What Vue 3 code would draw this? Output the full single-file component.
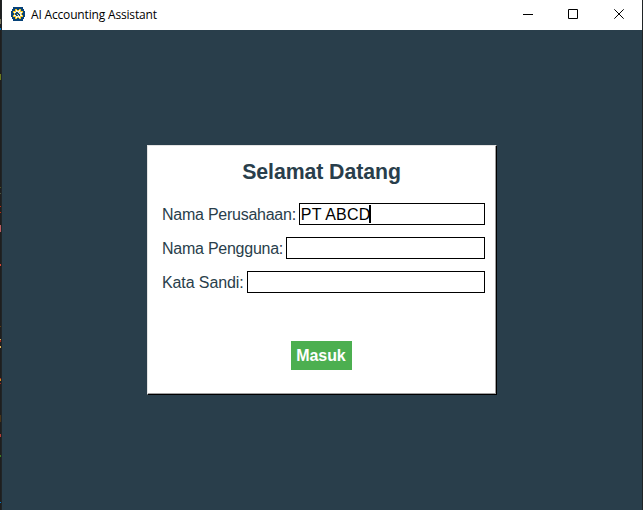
<script setup>
import { ref } from 'vue'

const title = 'AI Accounting Assistant'
const fields = ref([
  { label: 'Nama Perusahaan:', value: 'PT ABCD', focused: true },
  { label: 'Nama Pengguna:', value: '', focused: false },
  { label: 'Kata Sandi:', value: '', focused: false },
])
</script>

<template>
  <div class="desktop">
    <div class="edge"></div>
    <main class="window">
      <header class="titlebar">
        <svg class="logo" width="16" height="16" viewBox="0 0 16 16" shape-rendering="crispEdges">
          <path fill="#064279" d="M3 1h10v2h2v10h-2v2H3v-2H1V3h2z" />
          <path fill="#fff" d="M1 3h1v2H1zM14 3h1v2h-1zM1 11h1v2H1zM14 11h1v2h-1z" />
          <path fill="#f4c829" d="M5 3h2v1h2V3h2v2h2v2h-1v2h1v2h-2v2H9v-1H7v1H5v-2H3V9h1V7H3V5h2z" />
          <path fill="#fff" d="M6 4h1v1H6zM9 4h1v1H9zM4 6h1v1H4zM11 6h1v1h-1zM4 9h1v1H4zM11 9h1v1h-1zM6 11h1v1H6zM9 11h1v1H9z" />
          <path fill="#e9efe9" d="M6 5h4v1h1v4h-1v1H6v-1H5V6h1z" />
          <path fill="#164b74" d="M6 6h2v1h1v1h1v2H9V9H8v1H6V9H5V7h1z" />
          <path fill="#e5d777" d="M9 6h1v1H9zM7 8h1v1H7z" />
        </svg>
        <span class="title">{{ title }}</span>
        <div class="controls">
          <svg width="11" height="11" viewBox="0 0 11 11" shape-rendering="crispEdges"><path d="M1 5h10v1H1z" /></svg>
          <svg width="11" height="11" viewBox="0 0 11 11"><path d="M.5.5h9v9h-9z" fill="none" stroke="#000" /></svg>
          <svg width="11" height="11" viewBox="0 0 11 11"><path d="M.3.3l9.4 9.4M9.7.3L.3 9.7" fill="none" stroke="#000" /></svg>
        </div>
      </header>
      <section class="body">
        <form class="card" @submit.prevent>
          <h1>Selamat Datang</h1>
          <label v-for="f in fields" :key="f.label" class="row">
            <span class="label">{{ f.label }}</span>
            <span class="field"><span>{{ f.value }}</span><i v-if="f.focused" class="caret"></i></span>
          </label>
          <button type="submit">Masuk</button>
        </form>
      </section>
    </main>
  </div>
</template>

<style>
body {
  overflow: hidden;
}
</style>

<style scoped>
.desktop {
  box-sizing: border-box;
  width: 643px;
  height: 510px;
  display: flex;
  background: #202426;
  padding-right: 1px;
}
.edge {
  width: 1px;
  margin-right: 1px;
  background: linear-gradient(#1e1e1e 19px, #77745b 19px 24px, #1e1e1e 24px 28px, #0079cc 28px 30px, #1e1e1e 30px 74px,
    #6b7a1c 74px 80px, #1e1e1e 80px 187px, #4d5120 187px 188px, #1e1e1e 188px 193px, #4b5540 193px 194px,
    #1e1e1e 194px 206px, #b62c12 206px 207px, #1e1e1e 207px 212px, #b62c12 212px 213px, #1e1e1e 213px 225px,
    #bd5c60 225px 232px, #1e1e1e 232px 264px, #d34534 264px 266px, #1e1e1e 266px 326px, #5b3c14 326px 327px,
    #1e1e1e 327px 339px, #d8a653 339px 340px, #a02b1d 340px 342px, #1e1e1e 342px 346px, #dfb255 346px 348px,
    #1e1e1e 348px 378px, #a52d20 378px 379px, #d58a20 379px 381px, #1e1e1e 381px 383px, #982626 383px 384px,
    #1e1e1e 384px 415px, #4a3518 415px 422px, #1e1e1e 422px 434px, #b23c36 434px 437px, #1e1e1e 437px 455px,
    #3b7b20 455px 457px, #1e1e1e 457px 502px, #0079cc 502px 503px, #1e1e1e 503px);
}
.window {
  flex: 1;
  display: flex;
  flex-direction: column;
}
.titlebar {
  height: 30px;
  box-sizing: border-box;
  display: flex;
  align-items: center;
  background: #fff;
  padding: 0 17px 0 8px;
}
.logo {
  margin-top: -2px;
}
.title {
  margin-left: 5px;
  font: 12px/16px "Open Sans", "Noto Sans", sans-serif;
  letter-spacing: -0.17px;
  color: #000;
  white-space: nowrap;
}
.controls {
  margin-left: auto;
  display: flex;
  gap: 35px;
  margin-top: -1px;
}
.controls svg {
  display: block;
}
.body {
  flex: 1;
  display: flex;
  justify-content: center;
  align-items: flex-start;
  padding: 115px 0 0 0;
  background: #293e4b;
}
.card {
  box-sizing: border-box;
  width: 350px;
  height: 250px;
  padding: 14px 11px 0 14px;
  background: #fff;
  border: 1px solid #000;
  border-top-color: #e3e3e3;
  border-left-color: #e3e3e3;
  box-shadow: inset -1px -1px #a0a0a0;
  display: flex;
  flex-direction: column;
  font-family: "Liberation Sans", Arial, sans-serif;
  color: #293e4b;
}
h1 {
  margin: 0 4px 19px 0;
  font-size: 21.3px;
  line-height: 24px;
  letter-spacing: -0.08px;
  font-weight: bold;
  text-align: center;
}
.row {
  display: flex;
  height: 22px;
  margin-bottom: 12px;
  font-size: 16px;
  line-height: 24px;
}
.label {
  margin-right: 3px;
  white-space: nowrap;
  letter-spacing: -0.25px;
}
.row:nth-of-type(3) .label {
  letter-spacing: -0.1px;
}
.field {
  flex: 1;
  box-sizing: border-box;
  border: 1px solid #000;
  padding-left: 1px;
  display: flex;
  align-items: center;
  color: #000;
  line-height: 20px;
}
.field span {
  padding-top: 2px;
  letter-spacing: 0.2px;
}
.caret {
  width: 2px;
  height: 18px;
  margin-left: -1px;
  background: #000;
}
button {
  width: 61px;
  height: 29px;
  margin: 36px 0 0 129px;
  padding: 0 1px 0 0;
  border: 0;
  background: #4caf50;
  color: #fff;
  font: bold 16px/29px "Liberation Sans", Arial, sans-serif;
  letter-spacing: -0.1px;
}
</style>
